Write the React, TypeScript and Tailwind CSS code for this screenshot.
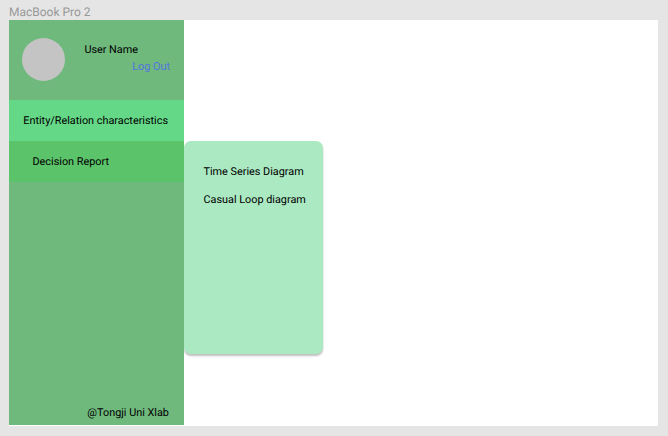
export default function App() {
  return (
    <div className="flex h-[436px] w-[668px] flex-col overflow-hidden bg-[#e5e5e5] pl-[8.6px] font-['Roboto',sans-serif] text-[10.85px] leading-[13px] text-black [text-rendering:geometricPrecision]">
      <div className="h-5 shrink-0 pl-[0.4px] pt-[5px] text-[12px] leading-[14px] text-[#999999]">MacBook Pro 2</div>
      <main className="flex h-[406px] w-[649.6px] bg-white">
        <aside className="relative z-10 flex h-[405.4px] w-[175.2px] shrink-0 flex-col bg-[#6fb97d]">
          <header className="flex h-20 shrink-0 pl-[13.4px] pt-[18px]">
            <div className="size-[43px] rounded-full bg-[#c4c4c4]" />
            <div className="flex w-[105px] flex-col pl-[19.4px] pt-[5px]">
              <span>User Name</span>
              <button className="mt-1 self-end text-left leading-[13px] text-[#5573e0]">Log Out</button>
            </div>
          </header>
          <nav>
            <div className="flex h-[41px] items-center whitespace-nowrap bg-[#65d888] pl-[14.7px]">Entity/Relation characteristics</div>
            <div className="flex h-[41px] items-center bg-[#5bc36a] pl-[23.9px]">Decision Report</div>
          </nav>
          <footer className="mt-auto pb-[6.4px] pl-[78.7px]">@Tongji Uni Xlab</footer>
        </aside>
        <section className="mt-[121px] flex h-[213px] w-[139.4px] flex-col gap-[15px] rounded-[7px] bg-[#abe9c2] pl-[19.7px] pt-6 shadow-[0_2px_2px_rgba(0,0,0,0.25)]">
          <span>Time Series Diagram</span>
          <span>Casual Loop diagram</span>
        </section>
      </main>
    </div>
  );
}
